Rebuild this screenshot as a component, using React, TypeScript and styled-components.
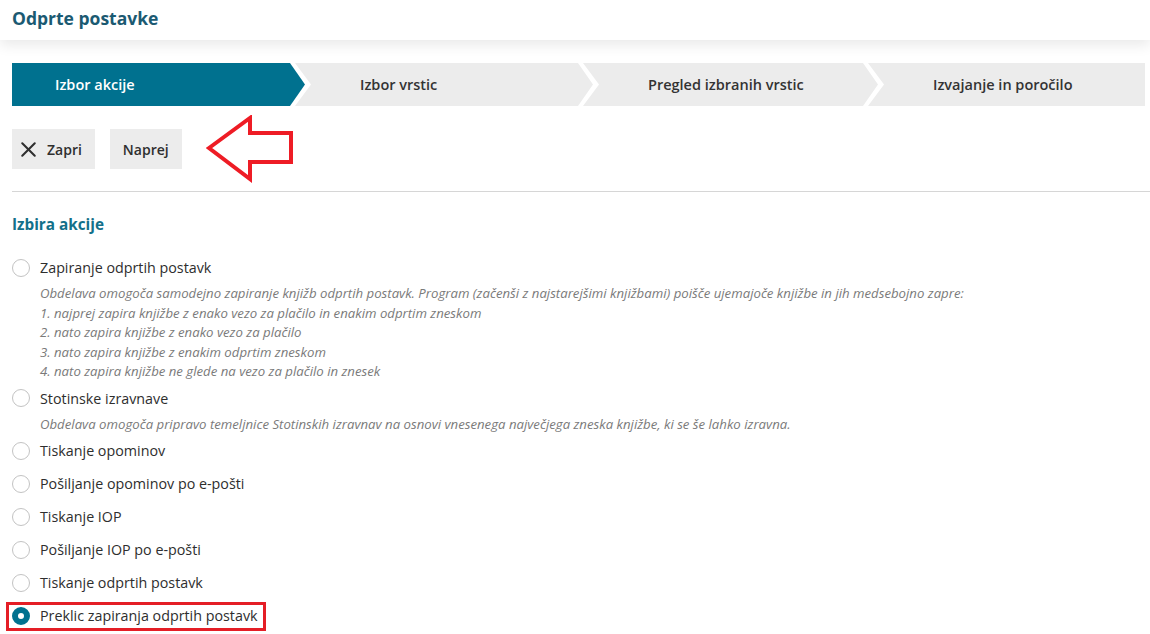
import styled, { createGlobalStyle } from "styled-components";
import { X } from "lucide-react";

const GlobalStyle = createGlobalStyle`
  html, body {
    margin: 0;
    padding: 0;
    background: #ffffff;
    font-family: "Open Sans", "Noto Sans", Arial, sans-serif;
  }
  * { box-sizing: border-box; }
`;

const steps = [
  { label: "Izbor akcije", width: 293 },
  { label: "Izbor vrstic", width: 298 },
  { label: "Pregled izbranih vrstic", width: 295 },
  { label: "Izvajanje in poročilo", width: 0 },
];

type Choice = { label: string; lines?: string[]; checked?: boolean };

const choices: Choice[] = [
  {
    label: "Zapiranje odprtih postavk",
    lines: [
      "Obdelava omogoča samodejno zapiranje knjižb odprtih postavk. Program (začenši z najstarejšimi knjižbami) poišče ujemajoče knjižbe in jih medsebojno zapre:",
      "1. najprej zapira knjižbe z enako vezo za plačilo in enakim odprtim zneskom",
      "2. nato zapira knjižbe z enako vezo za plačilo",
      "3. nato zapira knjižbe z enakim odprtim zneskom",
      "4. nato zapira knjižbe ne glede na vezo za plačilo in znesek",
    ],
  },
  {
    label: "Stotinske izravnave",
    lines: [
      "Obdelava omogoča pripravo temeljnice Stotinskih izravnav na osnovi vnesenega največjega zneska knjižbe, ki se še lahko izravna.",
    ],
  },
  { label: "Tiskanje opominov" },
  { label: "Pošiljanje opominov po e-pošti" },
  { label: "Tiskanje IOP" },
  { label: "Pošiljanje IOP po e-pošti" },
  { label: "Tiskanje odprtih postavk" },
  { label: "Preklic zapiranja odprtih postavk", checked: true },
];

function App() {
  return (
    <Page>
      <GlobalStyle />
      <Header>
        <Title>Odprte postavke</Title>
      </Header>
      <Main>
        <Stepper>
          {steps.map((s, i) => (
            <Step
              key={s.label}
              $width={s.width}
              $active={i === 0}
              $first={i === 0}
              $last={i === steps.length - 1}
            >
              {s.label}
            </Step>
          ))}
        </Stepper>

        <Toolbar>
          <Button $icon>
            <X size={25} strokeWidth={2} />
            Zapri
          </Button>
          <Button>Naprej</Button>
          <Pointer width="90" height="68" viewBox="0 0 90 68">
            <polygon
              points="3,33 44,3 44,18 85,18 85,47 44,47 44,64"
              fill="none"
              stroke="#ee1c25"
              strokeWidth="4"
              strokeLinejoin="miter"
            />
          </Pointer>
        </Toolbar>

        <Divider />

        <SectionTitle>Izbira akcije</SectionTitle>

        <Options>
          {choices.map((c) => (
            <div key={c.label}>
              <Option $highlight={c.checked}>
                <Radio $checked={c.checked} />
                <OptionLabel>{c.label}</OptionLabel>
              </Option>
              {c.lines && (
                <Description>
                  {c.lines.map((l) => (
                    <DescLine key={l}>{l}</DescLine>
                  ))}
                </Description>
              )}
            </div>
          ))}
        </Options>
      </Main>
    </Page>
  );
}

const Page = styled.div`
  width: 1150px;
  height: 634px;
  overflow: hidden;
  background: #ffffff;
`;

const Header = styled.div`
  height: 40px;
  padding: 0 12px;
  display: flex;
  align-items: center;
  background: #ffffff;
  box-shadow: 0 5px 14px rgba(0, 0, 0, 0.09);
  position: relative;
  z-index: 1;
`;

const Title = styled.h1`
  margin: -4px 0 0;
  font-size: 17.5px;
  font-weight: 700;
  color: #1b5a72;
`;

const Main = styled.div`
  padding: 23px 5px 0 12px;
`;

const Stepper = styled.div`
  display: flex;
  height: 43px;
`;

const Step = styled.div<{ $width: number; $active?: boolean; $first?: boolean; $last?: boolean }>`
  flex: ${(p) => (p.$width ? `0 0 ${p.$width}px` : "1")};
  display: flex;
  align-items: center;
  margin-left: ${(p) => (p.$first ? "0" : "-10px")};
  padding-left: ${(p) => (p.$first ? "43px" : "65px")};
  font-size: 14.5px;
  font-weight: 600;
  white-space: nowrap;
  color: ${(p) => (p.$active ? "#ffffff" : "#333333")};
  background: ${(p) => (p.$active ? "#00718f" : "#ececec")};
  clip-path: ${(p) =>
    p.$first
      ? "polygon(0 0, calc(100% - 15px) 0, 100% 50%, calc(100% - 15px) 100%, 0 100%)"
      : p.$last
      ? "polygon(0 0, 100% 0, 100% 100%, 0 100%, 16px 50%)"
      : "polygon(0 0, calc(100% - 15px) 0, 100% 50%, calc(100% - 15px) 100%, 0 100%, 16px 50%)"};
`;

const Toolbar = styled.div`
  display: flex;
  align-items: center;
  gap: 15px;
  margin-top: 23px;
  height: 40px;
`;

const Button = styled.button<{ $icon?: boolean }>`
  height: 40px;
  display: flex;
  align-items: center;
  gap: 6px;
  padding: ${(p) => (p.$icon ? "0 13px 0 4px" : "0 13px")};
  border: none;
  background: #ececec;
  font-family: "Open Sans", Arial, sans-serif;
  font-size: 14px;
  font-weight: 600;
  color: #2f2f2f;
`;

const Pointer = styled.svg`
  margin: -12px 0 -12px 9px;
  flex-shrink: 0;
`;

const Divider = styled.hr`
  margin: 22px -5px 0 0;
  border: none;
  border-top: 1px solid #d6d6d6;
`;

const SectionTitle = styled.h2`
  margin: 22px 0 0;
  font-size: 15.3px;
  line-height: 20px;
  font-weight: 700;
  color: #13708a;
`;

const Options = styled.div`
  margin-top: 17px;
`;

const Option = styled.div<{ $highlight?: boolean }>`
  position: relative;
  height: 33px;
  display: flex;
  align-items: center;
  width: fit-content;
  ${(p) =>
    p.$highlight &&
    `
    &::after {
      content: "";
      position: absolute;
      left: -6px;
      right: -8px;
      top: 2.5px;
      bottom: 1.5px;
      border: 3px solid #e41e26;
    }
  `}
`;

const Radio = styled.span<{ $checked?: boolean }>`
  width: 18px;
  height: 18px;
  border-radius: 50%;
  background: #ffffff;
  border: ${(p) => (p.$checked ? "6px solid #00718f" : "1.5px solid #c3c3c3")};
  flex-shrink: 0;
`;

const OptionLabel = styled.span`
  margin-left: 10px;
  font-size: 14.3px;
  color: #2e2e2e;
`;

const Description = styled.div`
  padding-left: 28px;
`;

const DescLine = styled.div`
  font-size: 13.2px;
  line-height: 19.5px;
  font-style: italic;
  color: #7a7a7a;
  white-space: nowrap;
`;

export default App;
